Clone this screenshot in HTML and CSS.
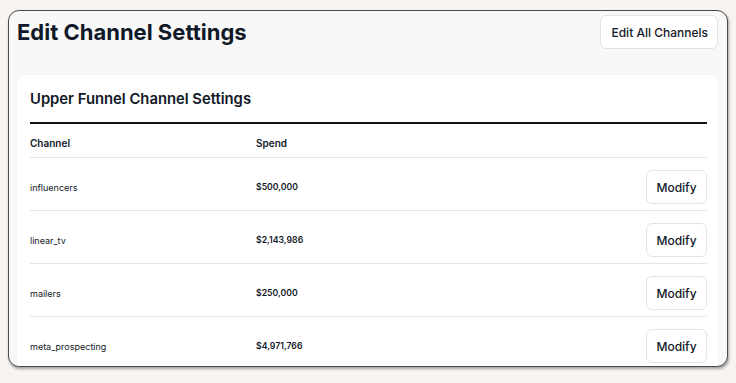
FILE: index.html
```html
<!DOCTYPE html>
<html lang="en">
<head>
  <meta charset="UTF-8">
  <meta name="viewport" content="width=device-width, initial-scale=1.0">
  <title>Edit Channel Settings</title>
  <link rel="stylesheet" href="styles.css">
</head>
<body>

<div class="window">
  <header class="page-header">
    <h1>Edit Channel Settings</h1>
    <button class="btn">Edit All Channels</button>
  </header>

  <section class="card">
    <h2>Upper Funnel Channel Settings</h2>
    <div class="channel-table">
      <div class="row head">
        <div>Channel</div>
        <div>Spend</div>
        <div></div>
      </div>
      <div class="row">
        <div class="name">influencers</div>
        <div class="spend">$500,000</div>
        <div><button class="btn">Modify</button></div>
      </div>
      <div class="row">
        <div class="name">linear_tv</div>
        <div class="spend">$2,143,986</div>
        <div><button class="btn">Modify</button></div>
      </div>
      <div class="row">
        <div class="name">mailers</div>
        <div class="spend">$250,000</div>
        <div><button class="btn">Modify</button></div>
      </div>
      <div class="row">
        <div class="name">meta_prospecting</div>
        <div class="spend">$4,971,766</div>
        <div><button class="btn">Modify</button></div>
      </div>
    </div>
  </section>
</div>

</body>
</html>
```

FILE: styles.css
```css
body {
  margin: 0;
  padding: 10px 8px;
  background: #f7f4f1;
  font-family: Inter, "Noto Sans", sans-serif;
  color: #111827;
}

.window {
  box-sizing: border-box;
  width: 720px;
  height: 357px;
  border: 1px solid #4b4b4b;
  border-radius: 11px;
  background: #f8f8f8;
  overflow: hidden;
  box-shadow: 1px 2px 3px rgba(0, 0, 0, 0.35);
  padding: 4px 9px 0 8px;
}

.page-header {
  display: flex;
  justify-content: space-between;
  align-items: flex-start;
}

.page-header h1 {
  margin: 0;
  padding-top: 4px;
  font-size: 22px;
  font-weight: 700;
}

.btn {
  font-family: Inter, "Noto Sans", sans-serif;
  background: white;
  border: 1px solid #e3e3e6;
  border-radius: 6px;
  color: #111827;
  font-size: 12px;
  font-weight: 500;
  padding: 0 10px;
  height: 34px;
  cursor: pointer;
}

.page-header .btn {
  padding: 0 9px 0 10px;
}

.card {
  margin-top: 26px;
  background: white;
  border-radius: 6px;
  padding: 13px 11px 0 13px;
  box-shadow: 0 0 2px rgba(0, 0, 0, 0.06);
}

.card h2 {
  margin: 0;
  font-size: 14.8px;
  font-weight: 600;
  line-height: 22px;
  padding-bottom: 12px;
  border-bottom: 2px solid #111;
}

.row {
  display: grid;
  grid-template-columns: 226px 1fr auto;
  align-items: center;
  border-bottom: 1px solid #e4e4ea;
  padding: 12px 0 6px;
  font-size: 9px;
}

.row.head {
  padding: 12px 0 7px;
  font-size: 10px;
  font-weight: 600;
  height: 14px;
}

.row .spend {
  font-weight: 600;
  font-size: 8.7px;
}

.row .btn {
  width: 61px;
  padding: 0;
}
```
